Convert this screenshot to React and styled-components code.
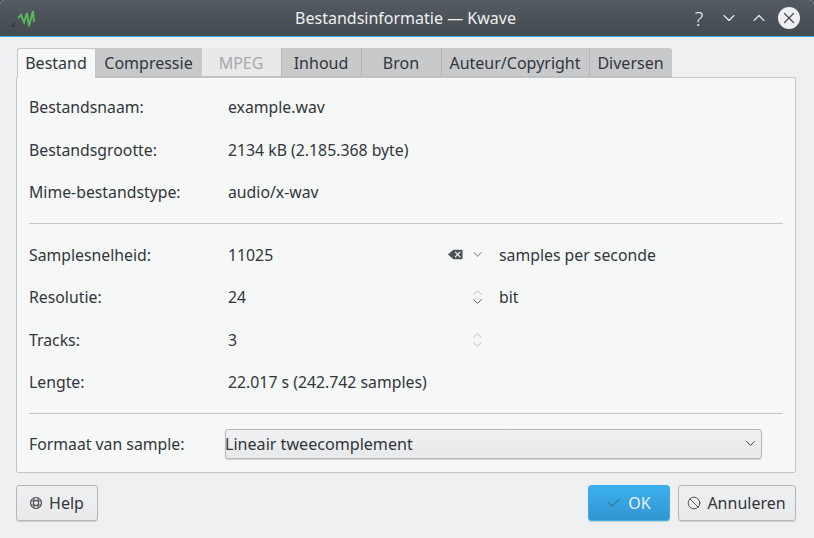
import React from 'react';
import styled, { createGlobalStyle } from 'styled-components';
import { Check, ChevronDown, ChevronUp, Ban, Delete, X } from 'lucide-react';

const Global = createGlobalStyle`
  html, body { margin: 0; padding: 0; background: #4a5157; }
  body { font-family: "Noto Sans", sans-serif; font-size: 15.8px; color: #31363b; }
`;

const Window = styled.div`
  width: 814px;
  height: 538px;
  display: flex;
  flex-direction: column;
  background: #eff0f1;
  border-radius: 5px 5px 0 0;
  overflow: hidden;
`;

const TitleBar = styled.header`
  height: 37px;
  box-sizing: border-box;
  flex: none;
  display: flex;
  align-items: center;
  padding: 0 14px 0 11px;
  color: #eff0f1;
  background: linear-gradient(#535b62, #434a50);
  border-bottom: 1px solid #3daee9;
`;

const TitleText = styled.div`
  flex: 1;
  text-align: center;
  font-size: 16px;
  padding-left: 86px;
`;

const WinButtons = styled.div`
  display: flex;
  align-items: center;
  gap: 8px;
`;

const WinButton = styled.span`
  width: 22px;
  height: 22px;
  display: flex;
  align-items: center;
  justify-content: center;
  border-radius: 50%;
  background: ${p => (p.$close ? '#eff0f1' : 'transparent')};
  color: ${p => (p.$close ? '#434a50' : '#eff0f1')};
  font-size: 20px;
  font-weight: 300;
`;

const Content = styled.main`
  flex: 1;
  display: flex;
  flex-direction: column;
  padding: 11px 18px 17px 16px;
`;

const TabBar = styled.div`
  display: flex;
  height: 29px;
  padding-left: 1px;
  flex: none;
  position: relative;
  z-index: 1;
`;

const Tab = styled.div`
  width: ${p => p.$w}px;
  display: flex;
  align-items: center;
  justify-content: center;
  box-sizing: border-box;
  font-size: 16px;
  height: ${p => (p.$active ? '30px' : '29px')};
  padding-top: ${p => (p.$active ? '0' : '1px')};
  padding-bottom: ${p => (p.$active ? '2px' : '0')};
  padding-right: 1px;
  background: ${p => (p.$active ? '#f6f7f7' : p.$disabled ? '#e8e9ea' : '#c8c9cb')};
  color: ${p => (p.$disabled ? '#a6a8aa' : '#31363b')};
  border: ${p => (p.$active ? '1px solid #c4c6c8' : 'none')};
  border-bottom: ${p => (p.$active ? 'none' : '1px solid #bcbec0')};
  border-left: ${p => (p.$divider ? '1px solid #b4b6b8' : p.$active ? '1px solid #c4c6c8' : 'none')};
  border-radius: ${p => (p.$active ? '3px 0 0 0' : p.$last ? '0 3px 0 0' : '0')};
`;

const Panel = styled.section`
  flex: 1;
  display: flex;
  flex-direction: column;
  box-sizing: border-box;
  background: #f6f7f7;
  border: 1px solid #c4c6c8;
  border-radius: 0 0 2px 2px;
  padding: 8px 12px 0;
`;

const Row = styled.div`
  display: grid;
  grid-template-columns: 199px 218px 52px 1fr;
  height: 42.5px;
  align-items: center;
`;

const Divider = styled.hr`
  margin: ${p => p.$margin};
  border: none;
  border-top: 1px solid #c4c6c8;
`;

const Unit = styled.div`
  padding-left: 1px;
`;

const Controls = styled.div`
  display: flex;
  align-items: center;
  justify-content: flex-end;
  gap: 6px;
  padding-right: 14px;
  color: #4d5257;
`;

const Spin = styled.div`
  display: flex;
  flex-direction: column;
  align-items: center;
  width: 14px;
  line-height: 0;
  color: #4d5257;
`;

const SpinIcon = styled.span`
  height: 9px;
  display: flex;
  align-items: center;
  opacity: ${p => (p.$dim ? 0.4 : 1)};
`;

const FormatRow = styled.div`
  display: flex;
  align-items: center;
  margin-top: 15px;
`;

const FormatLabel = styled.div`
  width: 196px;
`;

const Select = styled.div`
  width: 537px;
  height: 30px;
  box-sizing: border-box;
  display: flex;
  align-items: center;
  justify-content: space-between;
  padding: 0 3px 0 0;
  border: 1px solid #b4b6b8;
  border-radius: 3px;
  background: linear-gradient(#eff0f1, #e8e9ea);
  box-shadow: 0 1px 1px rgba(0, 0, 0, 0.15);
`;

const SelectText = styled.span`
  font-size: 16.1px;
  margin-left: -1px;
`;

const Footer = styled.footer`
  display: flex;
  justify-content: space-between;
  margin-top: 12px;
  flex: none;
`;

const Group = styled.div`
  display: flex;
  gap: 8px;
`;

const Button = styled.div`
  width: ${p => p.$w}px;
  height: 36px;
  box-sizing: border-box;
  display: flex;
  align-items: center;
  justify-content: center;
  gap: 6px;
  font-size: 16px;
  padding-right: 1px;
  border-radius: 3px;
  border: 1px solid ${p => (p.$primary ? '#3daee9' : '#b4b6b8')};
  background: ${p => (p.$primary ? 'linear-gradient(#3cb0ee, #3295d2)' : 'linear-gradient(#eff0f1, #e8e9ea)')};
  color: ${p => (p.$primary ? '#eff0f1' : '#31363b')};
  box-shadow: 0 1px 1px rgba(0, 0, 0, 0.15);
`;

const Logo = () => (
  <svg width="26" height="20" viewBox="0 0 26 20" fill="none">
    <path d="M0 18h6M2 18l2-4" stroke="#2e3235" strokeWidth="1" />
    <path d="M7 10l3-3 3 7 3-9 2 13 4-15 1 11" stroke="#5cb85c" strokeWidth="1.9" />
  </svg>
);

const HelpIcon = () => (
  <svg width="14" height="14" viewBox="0 0 14 14" fill="none" stroke="#4d5257">
    <circle cx="7" cy="7" r="5.5" strokeWidth="1.2" />
    <circle cx="7" cy="7" r="2.6" strokeWidth="1.1" />
    <path d="M5 1.6v3.6M9 1.6v3.6M5 8.8v3.6M9 8.8v3.6M1.6 5h3.6M1.6 9h3.6M8.8 5h3.6M8.8 9h3.6" strokeWidth="1.1" />
  </svg>
);

export default function App() {
  return (
    <>
      <Global />
      <Window>
        <TitleBar>
          <Logo />
          <TitleText>Bestandsinformatie — Kwave</TitleText>
          <WinButtons>
            <WinButton>?</WinButton>
            <WinButton><ChevronDown size={20} strokeWidth={1.3} /></WinButton>
            <WinButton><ChevronUp size={20} strokeWidth={1.3} /></WinButton>
            <WinButton $close><X size={18} strokeWidth={1.6} /></WinButton>
          </WinButtons>
        </TitleBar>
        <Content>
          <TabBar>
            <Tab $active $w={79}>Bestand</Tab>
            <Tab $w={106}>Compressie</Tab>
            <Tab $w={79} $disabled>MPEG</Tab>
            <Tab $w={80} $divider>Inhoud</Tab>
            <Tab $w={80} $divider>Bron</Tab>
            <Tab $w={148} $divider>Auteur/Copyright</Tab>
            <Tab $w={83} $divider $last>Diversen</Tab>
          </TabBar>
          <Panel>
            <Row><div>Bestandsnaam:</div><div>example.wav</div></Row>
            <Row><div>Bestandsgrootte:</div><div>2134 kB (2.185.368 byte)</div></Row>
            <Row><div>Mime-bestandstype:</div><div>audio/x-wav</div></Row>
            <Divider $margin="9px 0 10px" />
            <Row>
              <div>Samplesnelheid:</div>
              <div>11025</div>
              <Controls>
                <Delete size={21} fill="#4d5257" color="#f6f7f7" strokeWidth={1.5} />
                <ChevronDown size={15} strokeWidth={1.5} />
              </Controls>
              <Unit>samples per seconde</Unit>
            </Row>
            <Row>
              <div>Resolutie:</div>
              <div>24</div>
              <Controls>
                <Spin>
                  <SpinIcon $dim><ChevronUp size={15} strokeWidth={1.3} /></SpinIcon>
                  <SpinIcon><ChevronDown size={15} strokeWidth={1.5} /></SpinIcon>
                </Spin>
              </Controls>
              <Unit>bit</Unit>
            </Row>
            <Row>
              <div>Tracks:</div>
              <div>3</div>
              <Controls>
                <Spin>
                  <SpinIcon $dim><ChevronUp size={15} strokeWidth={1.3} /></SpinIcon>
                  <SpinIcon $dim><ChevronDown size={15} strokeWidth={1.3} /></SpinIcon>
                </Spin>
              </Controls>
            </Row>
            <Row><div>Lengte:</div><div>22.017 s (242.742 samples)</div></Row>
            <Divider $margin="9px 0 0" />
            <FormatRow>
              <FormatLabel>Formaat van sample:</FormatLabel>
              <Select>
                <SelectText>Lineair tweecomplement</SelectText>
                <ChevronDown size={15} strokeWidth={1.5} />
              </Select>
            </FormatRow>
          </Panel>
          <Footer>
            <Button $w={82}><HelpIcon />Help</Button>
            <Group>
              <Button $primary $w={82}><Check size={16} color="#31515f" strokeWidth={1.3} />OK</Button>
              <Button $w={118}><Ban size={14} strokeWidth={1.4} />Annuleren</Button>
            </Group>
          </Footer>
        </Content>
      </Window>
    </>
  );
}
